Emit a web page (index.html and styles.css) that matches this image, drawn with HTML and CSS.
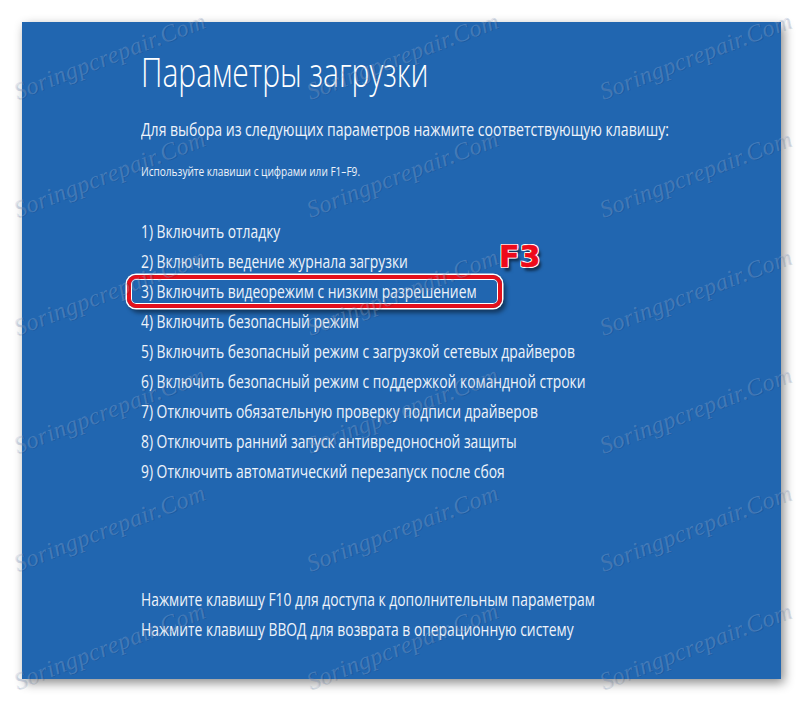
FILE: index.html
```html
<!DOCTYPE html>
<html lang="ru">
<head>
    <meta charset="UTF-8">
    <meta name="viewport" content="width=device-width, initial-scale=1.0">
    <title>Параметры загрузки</title>
    <link rel="stylesheet" href="styles.css">
</head>
<body>

<div class="panel">
    <div class="screen">
        <h1 class="title">Параметры загрузки</h1>
        <p class="lead">Для выбора из следующих параметров нажмите соответствующую клавишу:</p>
        <p class="hint">Используйте клавиши с цифрами или F1–F9.</p>

        <ul class="options">
            <li>1) Включить отладку</li>
            <li>2) Включить ведение журнала загрузки</li>
            <li>3) Включить видеорежим с низким разрешением</li>
            <li>4) Включить безопасный режим</li>
            <li>5) Включить безопасный режим с загрузкой сетевых драйверов</li>
            <li>6) Включить безопасный режим с поддержкой командной строки</li>
            <li>7) Отключить обязательную проверку подписи драйверов</li>
            <li>8) Отключить ранний запуск антивредоносной защиты</li>
            <li>9) Отключить автоматический перезапуск после сбоя</li>
        </ul>

        <div class="keys">
            <p>Нажмите клавишу F10 для доступа к дополнительным параметрам</p>
            <p>Нажмите клавишу ВВОД для возврата в операционную систему</p>
        </div>
    </div>

    <!-- annotation over option 3 -->
    <div class="mark-box"></div>
    <div class="mark-key">F3</div>
</div>

<div class="watermarks">
    <div class="watermark-grid">
        <span>Soringpcrepair.Com</span><span>Soringpcrepair.Com</span><span>Soringpcrepair.Com</span>
        <span>Soringpcrepair.Com</span><span>Soringpcrepair.Com</span><span>Soringpcrepair.Com</span>
        <span>Soringpcrepair.Com</span><span>Soringpcrepair.Com</span><span>Soringpcrepair.Com</span>
        <span>Soringpcrepair.Com</span><span>Soringpcrepair.Com</span><span>Soringpcrepair.Com</span>
        <span>Soringpcrepair.Com</span><span>Soringpcrepair.Com</span><span>Soringpcrepair.Com</span>
        <span>Soringpcrepair.Com</span><span>Soringpcrepair.Com</span><span>Soringpcrepair.Com</span>
    </div>
</div>

</body>
</html>
```

FILE: styles.css
```css
body {
    margin: 0;
    background-color: #ffffff;
    font-family: 'Open Sans', 'Noto Sans', sans-serif;
    position: relative;
    width: 803px;
    height: 701px;
    overflow: hidden;
}
.panel {
    position: relative;
    box-sizing: border-box;
    width: 759px;
    height: 657px;
    margin: 22px 0 0 22px;
    padding: 30px 0 0 119px;
    background-color: #2166b0;
    box-shadow: 3px 4px 10px rgba(0, 0, 0, 0.45);
    color: #eef3fa;
}
.screen {
    white-space: nowrap;
}
.screen p, .screen ul {
    margin: 0;
    padding: 0;
    list-style: none;
}
.title {
    margin: 0;
    font-size: 40px;
    font-weight: 300;
    line-height: 40px;
    color: #ffffff;
    transform: scaleX(0.75);
    transform-origin: left top;
}
.lead {
    margin-top: 22px !important;
    font-size: 18px;
    line-height: 30px;
    transform: scaleX(0.78);
    transform-origin: left top;
}
.hint {
    margin-top: 18px !important;
    font-size: 12px;
    line-height: 20px;
    transform: scaleX(0.84);
    transform-origin: left top;
}
.options {
    margin-top: 34px !important;
}
.options li, .keys p {
    font-size: 18px;
    line-height: 30px;
    transform: scaleX(0.77);
    transform-origin: left top;
}
.keys {
    margin-top: 98px;
}
.mark-box {
    position: absolute;
    left: 105px;
    top: 253px;
    width: 375px;
    height: 33px;
    box-sizing: border-box;
    border: 4px solid #e4101c;
    border-radius: 9px;
    box-shadow: 0 0 0 1.5px #ffffff, inset 0 0 0 1px #ffffff, 3px 4px 4px 1px rgba(0, 0, 0, 0.45);
}
.mark-key {
    position: absolute;
    left: 477px;
    top: 220px;
    font-family: 'DejaVu Sans', sans-serif;
    font-weight: bold;
    font-size: 30px;
    line-height: 30px;
    color: #ee0a1a;
    -webkit-text-stroke: 0.6px #ee0a1a;
    text-shadow: 1px 0 #fff, -1px 0 #fff, 0 1px #fff, 0 -1px #fff,
                 1px 1px #fff, -1px -1px #fff, 1px -1px #fff, -1px 1px #fff,
                 3px 4px 3px rgba(0, 0, 0, 0.55);
}
.watermarks {
    position: absolute;
    left: 0;
    top: 0;
    width: 803px;
    height: 701px;
    overflow: hidden;
    pointer-events: none;
}
.watermark-grid {
    display: grid;
    grid-template-columns: repeat(3, 293px);
    grid-auto-rows: 118px;
    margin: -3px 0 0 -37px;
}
.watermarks span {
    display: flex;
    align-items: center;
    justify-content: center;
    font-family: 'Liberation Serif', serif;
    font-style: italic;
    font-size: 24px;
    letter-spacing: 0.5px;
    color: rgba(160, 180, 215, 0.3);
    text-shadow: 1px 1px 0 rgba(0, 20, 60, 0.12);
    transform: rotate(-21deg);
}
```
